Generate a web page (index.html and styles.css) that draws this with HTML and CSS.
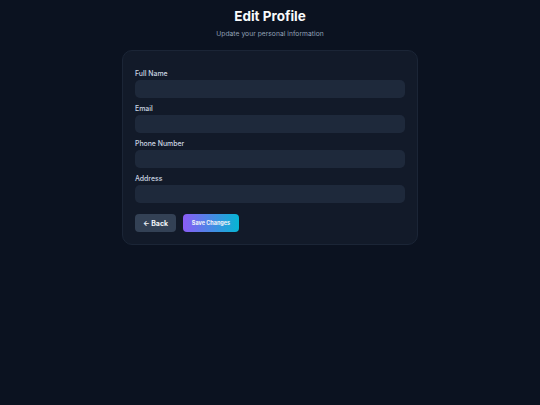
FILE: index.html
```html
<!DOCTYPE html>
<html lang="en">
<head>
<meta charset="utf-8">
<title>Edit Profile</title>
<link rel="stylesheet" href="styles.css">
</head>
<body>
<main class="page">
  <header class="head">
    <h1 class="title">Edit Profile</h1>
    <p class="subtitle">Update your personal information</p>
  </header>
  <form class="card">
    <div class="field">
      <label class="label">Full Name</label>
      <input class="input" type="text">
    </div>
    <div class="field">
      <label class="label">Email</label>
      <input class="input" type="email">
    </div>
    <div class="field">
      <label class="label">Phone Number</label>
      <input class="input" type="tel">
    </div>
    <div class="field">
      <label class="label">Address</label>
      <input class="input" type="text">
    </div>
    <div class="actions">
      <button type="button" class="btn btn-back">← Back</button>
      <button type="button" class="btn btn-save">Save Changes</button>
    </div>
  </form>
</main>
</body>
</html>
```
FILE: styles.css
```css
* { box-sizing: border-box; }
html, body { margin: 0; padding: 0; }
body {
  background: #0b1220;
  font-family: Inter, "Noto Sans", "Liberation Sans", sans-serif;
  color: #f1f5f9;
  width: 540px;
  height: 405px;
}
.page {
  display: flex;
  flex-direction: column;
  align-items: center;
  padding-top: 8px;
}
.head { text-align: center; }
.title {
  margin: 0;
  font-size: 13.5px;
  line-height: 17px;
  font-weight: 700;
  color: #f8fafc;
}
.subtitle {
  margin: 4px 0 0;
  font-size: 6.7px;
  line-height: 10px;
  color: #94a3b8;
  letter-spacing: 0.05px;
}
.card {
  margin-top: 11px;
  width: 296px;
  background: #121a29;
  border: 1px solid #1b2536;
  border-radius: 10px;
  padding: 17px 12px 12px;
  display: flex;
  flex-direction: column;
  gap: 5px;
}
.field {
  display: flex;
  flex-direction: column;
  gap: 1px;
}
.label {
  font-size: 6.9px;
  line-height: 11px;
  color: #cbd5e1;
  font-weight: 500;
}
.input {
  height: 18px;
  border: none;
  border-radius: 5px;
  background: #1e293b;
  outline: none;
  padding: 0 8px;
}
.actions {
  display: flex;
  gap: 7px;
  margin-top: 6px;
}
.btn {
  height: 18px;
  border: none;
  border-radius: 4px;
  font-family: Inter, "Noto Sans", sans-serif;
  font-weight: 700;
  color: #f1f5f9;
  padding: 0;
  display: flex;
  align-items: center;
  justify-content: center;
}
.btn-back {
  width: 41px;
  background: #334155;
  font-size: 7px;
}
.btn-save {
  width: 56px;
  background: linear-gradient(90deg, #8b5cf6, #06b6d4);
  font-size: 5.5px;
}
```
